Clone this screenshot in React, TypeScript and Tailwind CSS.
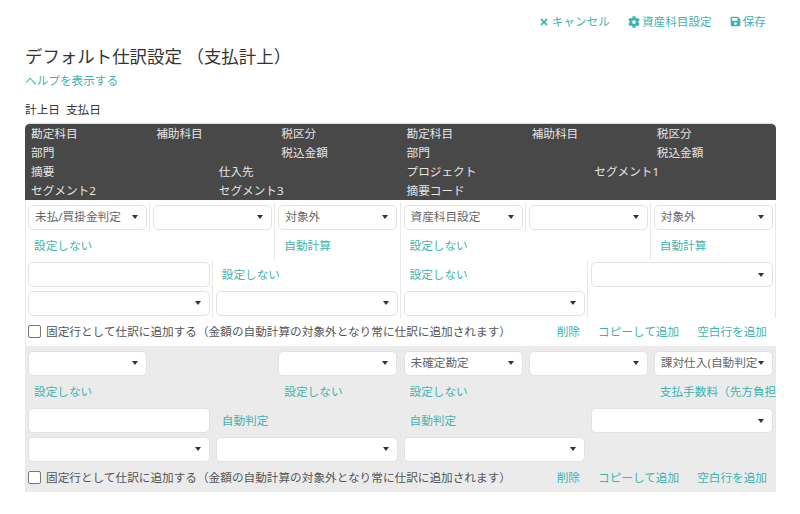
import { FaCog, FaSave, FaTimes } from "react-icons/fa";

const linkClass = "text-[#3fb4ae]";

type Half = {
  a: string;
  b: string | null;
  c: string;
  line2: string;
  line2c: string;
  d: string | null;
  e: string;
};

const Select = ({ value = "" }: { value?: string }) => (
  <div className="flex h-[25px] w-full items-center justify-between rounded-[5px] border border-[#e3e3e3] bg-white pl-[6px] pr-[8px] text-[#666]">
    <span className="overflow-hidden whitespace-nowrap leading-[18px]">{value}</span>
    <span className="ml-[1px] h-0 w-0 shrink-0 border-x-[3.5px] border-t-[4px] border-x-transparent border-t-[#333]" />
  </div>
);

const Cell = ({ children, line = true }: { children?: React.ReactNode; line?: boolean }) => (
  <div className={`flex h-[28.7px] items-center px-[3px] ${line ? "shadow-[inset_-1px_0_0_#e9e9e9]" : ""}`}>
    {children}
  </div>
);

const Link = ({ children }: { children: React.ReactNode }) => (
  <span className={`whitespace-nowrap pl-[6px] ${linkClass}`}>{children}</span>
);

const EntryHalf = ({ h, lastCol }: { h: Half; lastCol: boolean }) => (
  <div className="min-w-0 overflow-hidden shadow-[inset_-1px_0_0_#e9e9e9]">
    <div className="grid grid-cols-3">
      <div className="col-span-2">
        <div className="grid grid-cols-2">
          <Cell>
            <Select value={h.a} />
          </Cell>
          <Cell>{h.b !== null && <Select value={h.b} />}</Cell>
        </div>
        <Cell>
          <Link>{h.line2}</Link>
        </Cell>
      </div>
      <div>
        <Cell line={false}>
          <Select value={h.c} />
        </Cell>
        <Cell line={false}>
          <Link>{h.line2c}</Link>
        </Cell>
      </div>
    </div>
    <div className="grid grid-cols-2">
      <div>
        <Cell>
          {h.d === null ? (
            <Link>{h.e}</Link>
          ) : (
            <div className="h-[25px] w-full rounded-[5px] border border-[#e3e3e3] bg-white" />
          )}
        </Cell>
        <Cell>
          <Select />
        </Cell>
      </div>
      <div>
        <Cell line={false}>{lastCol ? <Select /> : <Link>{h.d}</Link>}</Cell>
        <Cell line={false}>{!lastCol && <Select />}</Cell>
      </div>
    </div>
  </div>
);

const EntryRow = ({ left, right, gray }: { left: Half; right: Half; gray: boolean }) => (
  <div className={`pt-[3px] shadow-[inset_1px_0_0_#e9e9e9] ${gray ? "bg-[#ebebeb]" : "bg-white"}`}>
    <div className="grid grid-cols-2">
      <EntryHalf h={left} lastCol={false} />
      <EntryHalf h={right} lastCol />
    </div>
    <div className="flex h-[28.2px] items-center pl-[3px] pr-[9px]">
      <span className="h-[13px] w-[13px] rounded-[2px] border border-[#777] bg-white" />
      <span className="ml-[5px] whitespace-nowrap text-[#555]">
        固定行として仕訳に追加する（金額の自動計算の対象外となり常に仕訳に追加されます）
      </span>
      <div className={`ml-auto flex gap-[18px] whitespace-nowrap ${linkClass}`}>
        <span>削除</span>
        <span>コピーして追加</span>
        <span>空白行を追加</span>
      </div>
    </div>
  </div>
);

const HeaderHalf = ({ r3, r4 }: { r3: [string, string]; r4: [string, string] }) => (
  <div>
    <div className="grid h-[19.2px] grid-cols-3 items-center">
      <span className="pl-[6px]">勘定科目</span>
      <span className="pl-[6px]">補助科目</span>
      <span className="pl-[6px]">税区分</span>
    </div>
    <div className="grid h-[19.2px] grid-cols-3 items-center">
      <span className="col-span-2 pl-[6px]">部門</span>
      <span className="pl-[6px]">税込金額</span>
    </div>
    <div className="grid h-[19.2px] grid-cols-2 items-center">
      <span className="pl-[6px]">{r3[0]}</span>
      <span className="pl-[6px]">{r3[1]}</span>
    </div>
    <div className="grid h-[19.2px] grid-cols-2 items-center">
      <span className="pl-[6px]">{r4[0]}</span>
      <span className="pl-[6px]">{r4[1]}</span>
    </div>
  </div>
);

export default function App() {
  return (
    <div className="h-[514px] w-[800px] overflow-hidden bg-white px-[25px] text-[11.65px] leading-none [font-family:'Noto_Sans','Noto_Sans_CJK_JP',sans-serif] text-[#444]">
      <div className={`flex h-[43px] items-center justify-end gap-[18px] pr-[9px] ${linkClass}`}>
        <span className="flex items-center gap-[3px]">
          <FaTimes className="h-[10px] w-[10px]" />
          キャンセル
        </span>
        <span className="flex items-center gap-[2px]">
          <FaCog className="h-[12px] w-[12px]" />
          資産科目設定
        </span>
        <span className="flex items-center gap-[2px]">
          <FaSave className="h-[11px] w-[11px]" />
          保存
        </span>
      </div>
      <h1 className="mt-[2px] text-[17.45px] leading-[22px] text-[#333]">デフォルト仕訳設定 （支払計上）</h1>
      <p className={`mt-[6px] leading-[16px] ${linkClass}`}>ヘルプを表示する</p>
      <p className="mt-[13px] leading-[16px] text-[#333]">計上日&nbsp;&nbsp;支払日</p>
      <div className="mt-[5px] w-[751px]">
        <div className="grid h-[77px] grid-cols-2 rounded-t-[5px] border-t border-[#ddd] bg-[#484848] text-[#e4e4e4]">
          <HeaderHalf r3={["摘要", "仕入先"]} r4={["セグメント2", "セグメント3"]} />
          <HeaderHalf r3={["プロジェクト", "セグメント1"]} r4={["摘要コード", ""]} />
        </div>
        <EntryRow
          gray={false}
          left={{ a: "未払/買掛金判定", b: "", c: "対象外", line2: "設定しない", line2c: "自動計算", d: "設定しない", e: "" }}
          right={{ a: "資産科目設定", b: "", c: "対象外", line2: "設定しない", line2c: "自動計算", d: null, e: "設定しない" }}
        />
        <EntryRow
          gray
          left={{ a: "", b: null, c: "", line2: "設定しない", line2c: "設定しない", d: "自動判定", e: "" }}
          right={{ a: "未確定勘定", b: "", c: "課対仕入(自動判定", line2: "設定しない", line2c: "支払手数料（先方負担）", d: null, e: "自動判定" }}
        />
      </div>
    </div>
  );
}
